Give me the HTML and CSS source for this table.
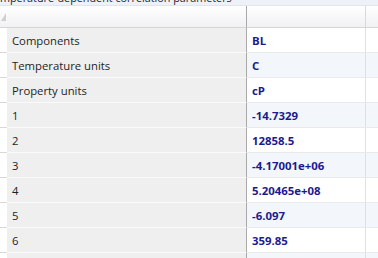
FILE: index.html
```html
<!DOCTYPE html>
<html>
<head>
<meta charset="utf-8">
<link rel="stylesheet" href="styles.css">
</head>
<body>
<div class="title"><span class="title-text">Temperature-dependent correlation parameters</span></div>
<div class="grid">
  <div class="corner"><svg width="5" height="8" viewBox="0 0 5 8"><path d="M5 0 L5 8 L0 8 Z" fill="#d0d0d0"/></svg></div>
  <div class="hdr hdr-label"></div>
  <div class="hdr hdr-value"></div>
  <div class="hdr hdr-fill"></div>

  <div class="rh"></div><div class="lbl">Components</div><div class="val">BL</div><div class="fill"></div>
  <div class="rh"></div><div class="lbl">Temperature units</div><div class="val alt">C</div><div class="fill alt"></div>
  <div class="rh"></div><div class="lbl">Property units</div><div class="val">cP</div><div class="fill"></div>
  <div class="rh"></div><div class="lbl">1</div><div class="val alt">-14.7329</div><div class="fill alt"></div>
  <div class="rh"></div><div class="lbl">2</div><div class="val">12858.5</div><div class="fill"></div>
  <div class="rh"></div><div class="lbl">3</div><div class="val alt">-4.17001e+06</div><div class="fill alt"></div>
  <div class="rh"></div><div class="lbl">4</div><div class="val">5.20465e+08</div><div class="fill"></div>
  <div class="rh"></div><div class="lbl">5</div><div class="val alt">-6.097</div><div class="fill alt"></div>
  <div class="rh"></div><div class="lbl">6</div><div class="val">359.85</div><div class="fill"></div>
  <div class="rh"></div><div class="lbl"></div><div class="val alt"></div><div class="fill alt"></div>
</div>
</body>
</html>
```
FILE: styles.css
```css
html, body {
  margin: 0;
  padding: 0;
  width: 378px;
  height: 258px;
  overflow: hidden;
  background: #ffffff;
  font-family: "Open Sans", "Noto Sans", sans-serif;
  font-size: 12px;
}
.title {
  height: 5px;
  overflow: hidden;
  background: #eef2f8;
  border-bottom: 1px solid #dfe6f0;
}
.title-text {
  display: block;
  margin-top: -9px;
  margin-left: -12px;
  line-height: 14px;
  font-size: 10.8px;
  color: #1e1e1e;
  white-space: nowrap;
}
.grid {
  display: grid;
  grid-template-columns: 7px 240px 119px 12px;
  grid-template-rows: 22px;
  grid-auto-rows: 25px;
}
.grid > div {
  box-sizing: border-box;
}
.corner {
  background: linear-gradient(#ffffff, #f1f2f4);
  border-bottom: 1px solid #d5d5d5;
  display: flex;
  align-items: center;
  padding-left: 1px;
  padding-top: 1px;
}
.hdr {
  background: linear-gradient(#ffffff, #f0f1f3);
  border-bottom: 1px solid #d5d5d5;
}
.hdr-label { border-right: 1px solid #a9a9a9; }
.hdr-value { border-right: 1px solid #d9d9d9; }
.rh {
  background: #ffffff;
  border-bottom: 1px solid #d8d8d8;
}
.lbl {
  background: #efefef;
  border-bottom: 1px solid #fafafa;
  border-right: 1px solid #a9a9a9;
  padding-left: 5px;
  display: flex;
  align-items: center;
  color: #1e1e1e;
  font-size: 11.3px;
}
.val {
  background: #ffffff;
  border-bottom: 1px solid #eaeaea;
  border-right: 1px solid #e0e0e0;
  padding-left: 5px;
  display: flex;
  align-items: center;
  color: #1b1b8e;
  font-weight: 700;
  font-size: 11.4px;
}
.fill {
  background: #ffffff;
  border-bottom: 1px solid #eaeaea;
}
.alt {
  background: #f3f7fc;
}
```
